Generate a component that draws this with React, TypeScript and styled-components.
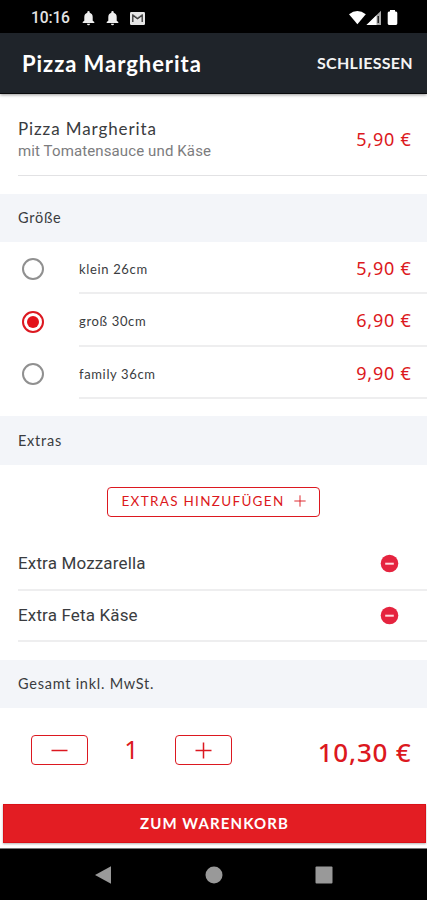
import React, { useState } from "react";
import styled, { createGlobalStyle } from "styled-components";

const GlobalStyle = createGlobalStyle`
  * { box-sizing: border-box; }
  body { margin: 0; background: #fff; }
  button { font: inherit; margin: 0; cursor: pointer; }
`;

const RED = "#dc1820";

const Screen = styled.div`
  width: 427px;
  height: 900px;
  display: flex;
  flex-direction: column;
  background: #fff;
  overflow: hidden;
  font-family: Lato, "Open Sans", sans-serif;
  color: #3a3c40;
`;

const StatusBar = styled.div`
  height: 33px;
  flex: none;
  padding: 3px 29px 0 31px;
  background: #000;
  color: #e4e4e4;
  display: flex;
  align-items: center;
  justify-content: space-between;
  font: 500 15.6px/20px Roboto, sans-serif;
`;

const StatusGroup = styled.div<{ $gap: number }>`
  display: flex;
  align-items: center;
  gap: ${(p) => p.$gap}px;
`;

const Clock = styled.span`
  width: 40px;
  letter-spacing: -0.15px;
`;

const Header = styled.header`
  height: 61px;
  flex: none;
  padding: 0 14px 0 22px;
  display: flex;
  align-items: center;
  justify-content: space-between;
  background: #1f242a;
  border-bottom: 1px solid #08090b;
  box-shadow: 0 1px 3px rgba(0, 0, 0, 0.4);
  color: #fff;
`;

const Title = styled.h1`
  margin: 0;
  padding-top: 1px;
  font-size: 22px;
  line-height: 28px;
  font-weight: 700;
  letter-spacing: 0.95px;
`;

const CloseButton = styled.button`
  padding: 0;
  border: 0;
  background: none;
  color: #f4f4f4;
  font-size: 16px;
  line-height: 22px;
  font-weight: 700;
  letter-spacing: 0.3px;
`;

const Product = styled.section`
  height: 82px;
  flex: none;
  margin: 0 0 18px 18px;
  padding: 7px 16px 0 0;
  border-bottom: 1.5px solid #e2e2e4;
  display: flex;
  align-items: center;
  justify-content: space-between;
`;

const ProductText = styled.div`
  padding-top: 3px;
`;

const ProductName = styled.div`
  font-size: 17px;
  line-height: 23px;
  letter-spacing: 0.9px;
`;

const ProductNote = styled.div`
  font: 400 15px/23px Roboto, sans-serif;
  letter-spacing: 0.12px;
  color: #7c7c7e;
`;

const Price = styled.div<{ $large?: boolean }>`
  font-family: "Noto Sans", sans-serif;
  font-size: ${(p) => (p.$large ? 26 : 18)}px;
  line-height: 30px;
  padding-top: ${(p) => (p.$large ? 3 : 1)}px;
  font-weight: ${(p) => (p.$large ? 500 : 400)};
  letter-spacing: ${(p) => (p.$large ? 0.8 : 0.75)}px;
  margin-right: -0.5px;
  color: ${RED};
`;

const SectionTitle = styled.h2<{ $height: number }>`
  height: ${(p) => p.$height}px;
  flex: none;
  margin: 0;
  padding: 0 0 1px 18px;
  display: flex;
  align-items: center;
  background: #f3f5f9;
  font-size: 14.5px;
  font-weight: 400;
  letter-spacing: 0.75px;
`;

const OptionList = styled.div`
  height: 174px;
  flex: none;
`;

const Option = styled.label`
  height: 52px;
  padding-left: 22px;
  display: flex;
  align-items: center;
  gap: 35px;
  cursor: pointer;
  &:nth-child(2) { height: 53px; }
`;

const HiddenRadio = styled.input`
  appearance: none;
  position: absolute;
`;

const RadioDot = styled.span<{ $on: boolean }>`
  width: 22px;
  height: 22px;
  flex: none;
  margin-top: 2px;
  border: 2px solid ${(p) => (p.$on ? RED : "#909090")};
  border-radius: 50%;
  display: grid;
  place-items: center;
  &::after {
    content: "";
    width: 12px;
    height: 12px;
    border-radius: 50%;
    background: ${(p) => (p.$on ? "#e3121b" : "transparent")};
  }
`;

const OptionBody = styled.span`
  flex: 1;
  height: 100%;
  padding-right: 16px;
  border-bottom: 2px solid #eeeeef;
  display: flex;
  align-items: center;
  justify-content: space-between;
  font-size: 13px;
  letter-spacing: 0.65px;
`;

const OptionName = styled.span`
  padding-top: 3px;
`;

const AddRow = styled.div`
  height: 73px;
  flex: none;
  padding-top: 22px;
  display: flex;
  justify-content: center;
  align-items: flex-start;
`;

const AddButton = styled.button`
  width: 213px;
  height: 30px;
  padding: 0 0 2px;
  display: flex;
  align-items: center;
  justify-content: center;
  gap: 9px;
  border: 1.5px solid ${RED};
  border-radius: 4px;
  background: #fff;
  color: ${RED};
  font-size: 13.5px;
  letter-spacing: 1.3px;
  white-space: nowrap;
`;

const ExtraList = styled.div`
  height: 122px;
  flex: none;
  padding-left: 18px;
`;

const ExtraRow = styled.div`
  height: 53px;
  padding: 0 28px 1px 0;
  border-bottom: 2px solid #eeeeef;
  display: flex;
  align-items: center;
  justify-content: space-between;
  font: 400 17px/24px Roboto, sans-serif;
  letter-spacing: 0.15px;
  & + & { height: 51px; }
`;

const RemoveButton = styled.button`
  padding: 0;
  border: 0;
  background: none;
  display: flex;
`;

const Summary = styled.div`
  height: 94px;
  flex: none;
  padding: 0 16px 10px 31px;
  display: flex;
  align-items: center;
  justify-content: space-between;
`;

const Stepper = styled.div`
  width: 201px;
  display: flex;
  align-items: center;
  justify-content: space-between;
`;

const StepButton = styled.button`
  width: 57px;
  height: 30px;
  padding: 0;
  display: grid;
  place-items: center;
  border: 1.5px solid ${RED};
  border-radius: 4px;
  background: #fff;
`;

const Quantity = styled.span`
  font: 400 25px/30px "Noto Sans", sans-serif;
  padding-bottom: 3px;
  color: ${RED};
`;

const CartArea = styled.div`
  height: 47px;
  flex: none;
  padding: 2px 1px 0 3px;
  border-bottom: 1px solid #777;
`;

const CartButton = styled.button`
  width: 100%;
  height: 39px;
  padding: 0 0 2px;
  border: 1px solid #da1118;
  background: #e31d23;
  box-shadow: 0 1px 2px rgba(0, 0, 0, 0.3);
  color: #fff;
  font-size: 15px;
  line-height: 20px;
  font-weight: 700;
  letter-spacing: 1.1px;
`;

const NavBar = styled.nav`
  flex: 1;
  padding: 0 94px 0 94px;
  background: #000;
  display: flex;
  align-items: center;
  justify-content: space-between;
`;

const Bell = () => (
  <svg width="13" height="15" viewBox="0 0 13 15" fill="#eee">
    <path d="M6.5 0a1.2 1.2 0 0 1 1.2 1.2v.5c2 .6 3 2.2 3 4.2v3.8L12.3 11v1H.7v-1l1.6-1.3V5.9c0-2 1-3.6 3-4.2v-.5A1.2 1.2 0 0 1 6.5 0zM5 12.7h3a1.5 1.5 0 0 1-3 0z" />
  </svg>
);

const Mail = () => (
  <svg width="15" height="13" viewBox="0 0 15 13">
    <rect width="15" height="13" rx="1.2" fill="#e6e6e6" />
    <path d="M2.8 10V3.2l4.7 3.4 4.7-3.4V10" fill="none" stroke="#333" strokeWidth="1.3" />
    <path d="M3 2.5 7.5 5.8 12 2.5" fill="none" stroke="#777" strokeWidth=".7" />
  </svg>
);

const SignalIcons = () => (
  <svg width="49" height="16" viewBox="0 0 49 16" fill="#fff">
    <path d="M0 4.3Q8.4-2.5 16.8 4.3L8.4 14.3z" />
    <path d="M17.5 15 32 .7V15z" fill="#aaa" />
    <path d="M17.5 15 27.5 5.2V15z" />
    <path d="M28.5 6h1.5v7h-1.5z" fill="#222" />
    <path d="M41 0h5v1.5h1a1.5 1.5 0 0 1 1.3 1.5v10.5A1.5 1.5 0 0 1 47 15h-7a1.5 1.5 0 0 1-1.3-1.5V3A1.5 1.5 0 0 1 40 1.5h1z" />
  </svg>
);

const StepIcon = ({ plus, size = 17, stroke = 1.5 }: { plus?: boolean; size?: number; stroke?: number }) => (
  <svg width={size} height={size} viewBox="0 0 17 17" fill="none" stroke={RED} strokeWidth={stroke}>
    <path d={plus ? "M.5 8.5h16M8.5.5v16" : "M.5 8.5h16"} />
  </svg>
);

const RemoveIcon = () => (
  <svg width="19" height="19" viewBox="0 0 19 19">
    <circle cx="9.5" cy="9.5" r="8.8" fill="#e5243f" />
    <path d="M5.2 9.7h8.6" stroke="#ffdce0" strokeWidth="2" />
  </svg>
);

const sizes = [
  { name: "klein 26cm", price: "5,90 €" },
  { name: "groß 30cm", price: "6,90 €" },
  { name: "family 36cm", price: "9,90 €" },
];

const extras = ["Extra Mozzarella", "Extra Feta Käse"];

export default function App() {
  const [selected, setSelected] = useState(1);
  return (
    <>
      <GlobalStyle />
      <Screen>
        <StatusBar>
          <StatusGroup $gap={11}>
            <Clock>10:16</Clock>
            <Bell />
            <Bell />
            <Mail />
          </StatusGroup>
          <SignalIcons />
        </StatusBar>
        <Header>
          <Title>Pizza Margherita</Title>
          <CloseButton>SCHLIESSEN</CloseButton>
        </Header>
        <Product>
          <ProductText>
            <ProductName>Pizza Margherita</ProductName>
            <ProductNote>mit Tomatensauce und Käse</ProductNote>
          </ProductText>
          <Price>5,90 €</Price>
        </Product>
        <SectionTitle $height={48}>Größe</SectionTitle>
        <OptionList>
          {sizes.map((s, i) => (
            <Option key={s.name}>
              <HiddenRadio type="radio" name="size" checked={selected === i} onChange={() => setSelected(i)} />
              <RadioDot $on={selected === i} />
              <OptionBody>
                <OptionName>{s.name}</OptionName>
                <Price>{s.price}</Price>
              </OptionBody>
            </Option>
          ))}
        </OptionList>
        <SectionTitle $height={49}>Extras</SectionTitle>
        <AddRow>
          <AddButton>
            EXTRAS HINZUFÜGEN
            <StepIcon plus size={12} stroke={1.3} />
          </AddButton>
        </AddRow>
        <ExtraList>
          {extras.map((name) => (
            <ExtraRow key={name}>
              {name}
              <RemoveButton aria-label={`${name} entfernen`}>
                <RemoveIcon />
              </RemoveButton>
            </ExtraRow>
          ))}
        </ExtraList>
        <SectionTitle $height={48}>Gesamt inkl. MwSt.</SectionTitle>
        <Summary>
          <Stepper>
            <StepButton aria-label="Weniger"><StepIcon /></StepButton>
            <Quantity>1</Quantity>
            <StepButton aria-label="Mehr"><StepIcon plus /></StepButton>
          </Stepper>
          <Price $large>10,30 €</Price>
        </Summary>
        <CartArea>
          <CartButton>ZUM WARENKORB</CartButton>
        </CartArea>
        <NavBar>
          <svg width="18" height="20" viewBox="0 0 18 20"><path d="M1 10 17 1.2v17.6z" fill="#999" /></svg>
          <svg width="18" height="18" viewBox="0 0 18 18"><circle cx="9" cy="9" r="8.5" fill="#999" /></svg>
          <svg width="18" height="18" viewBox="0 0 18 18"><rect x=".5" y=".5" width="17" height="17" rx="1" fill="#999" /></svg>
        </NavBar>
      </Screen>
    </>
  );
}
